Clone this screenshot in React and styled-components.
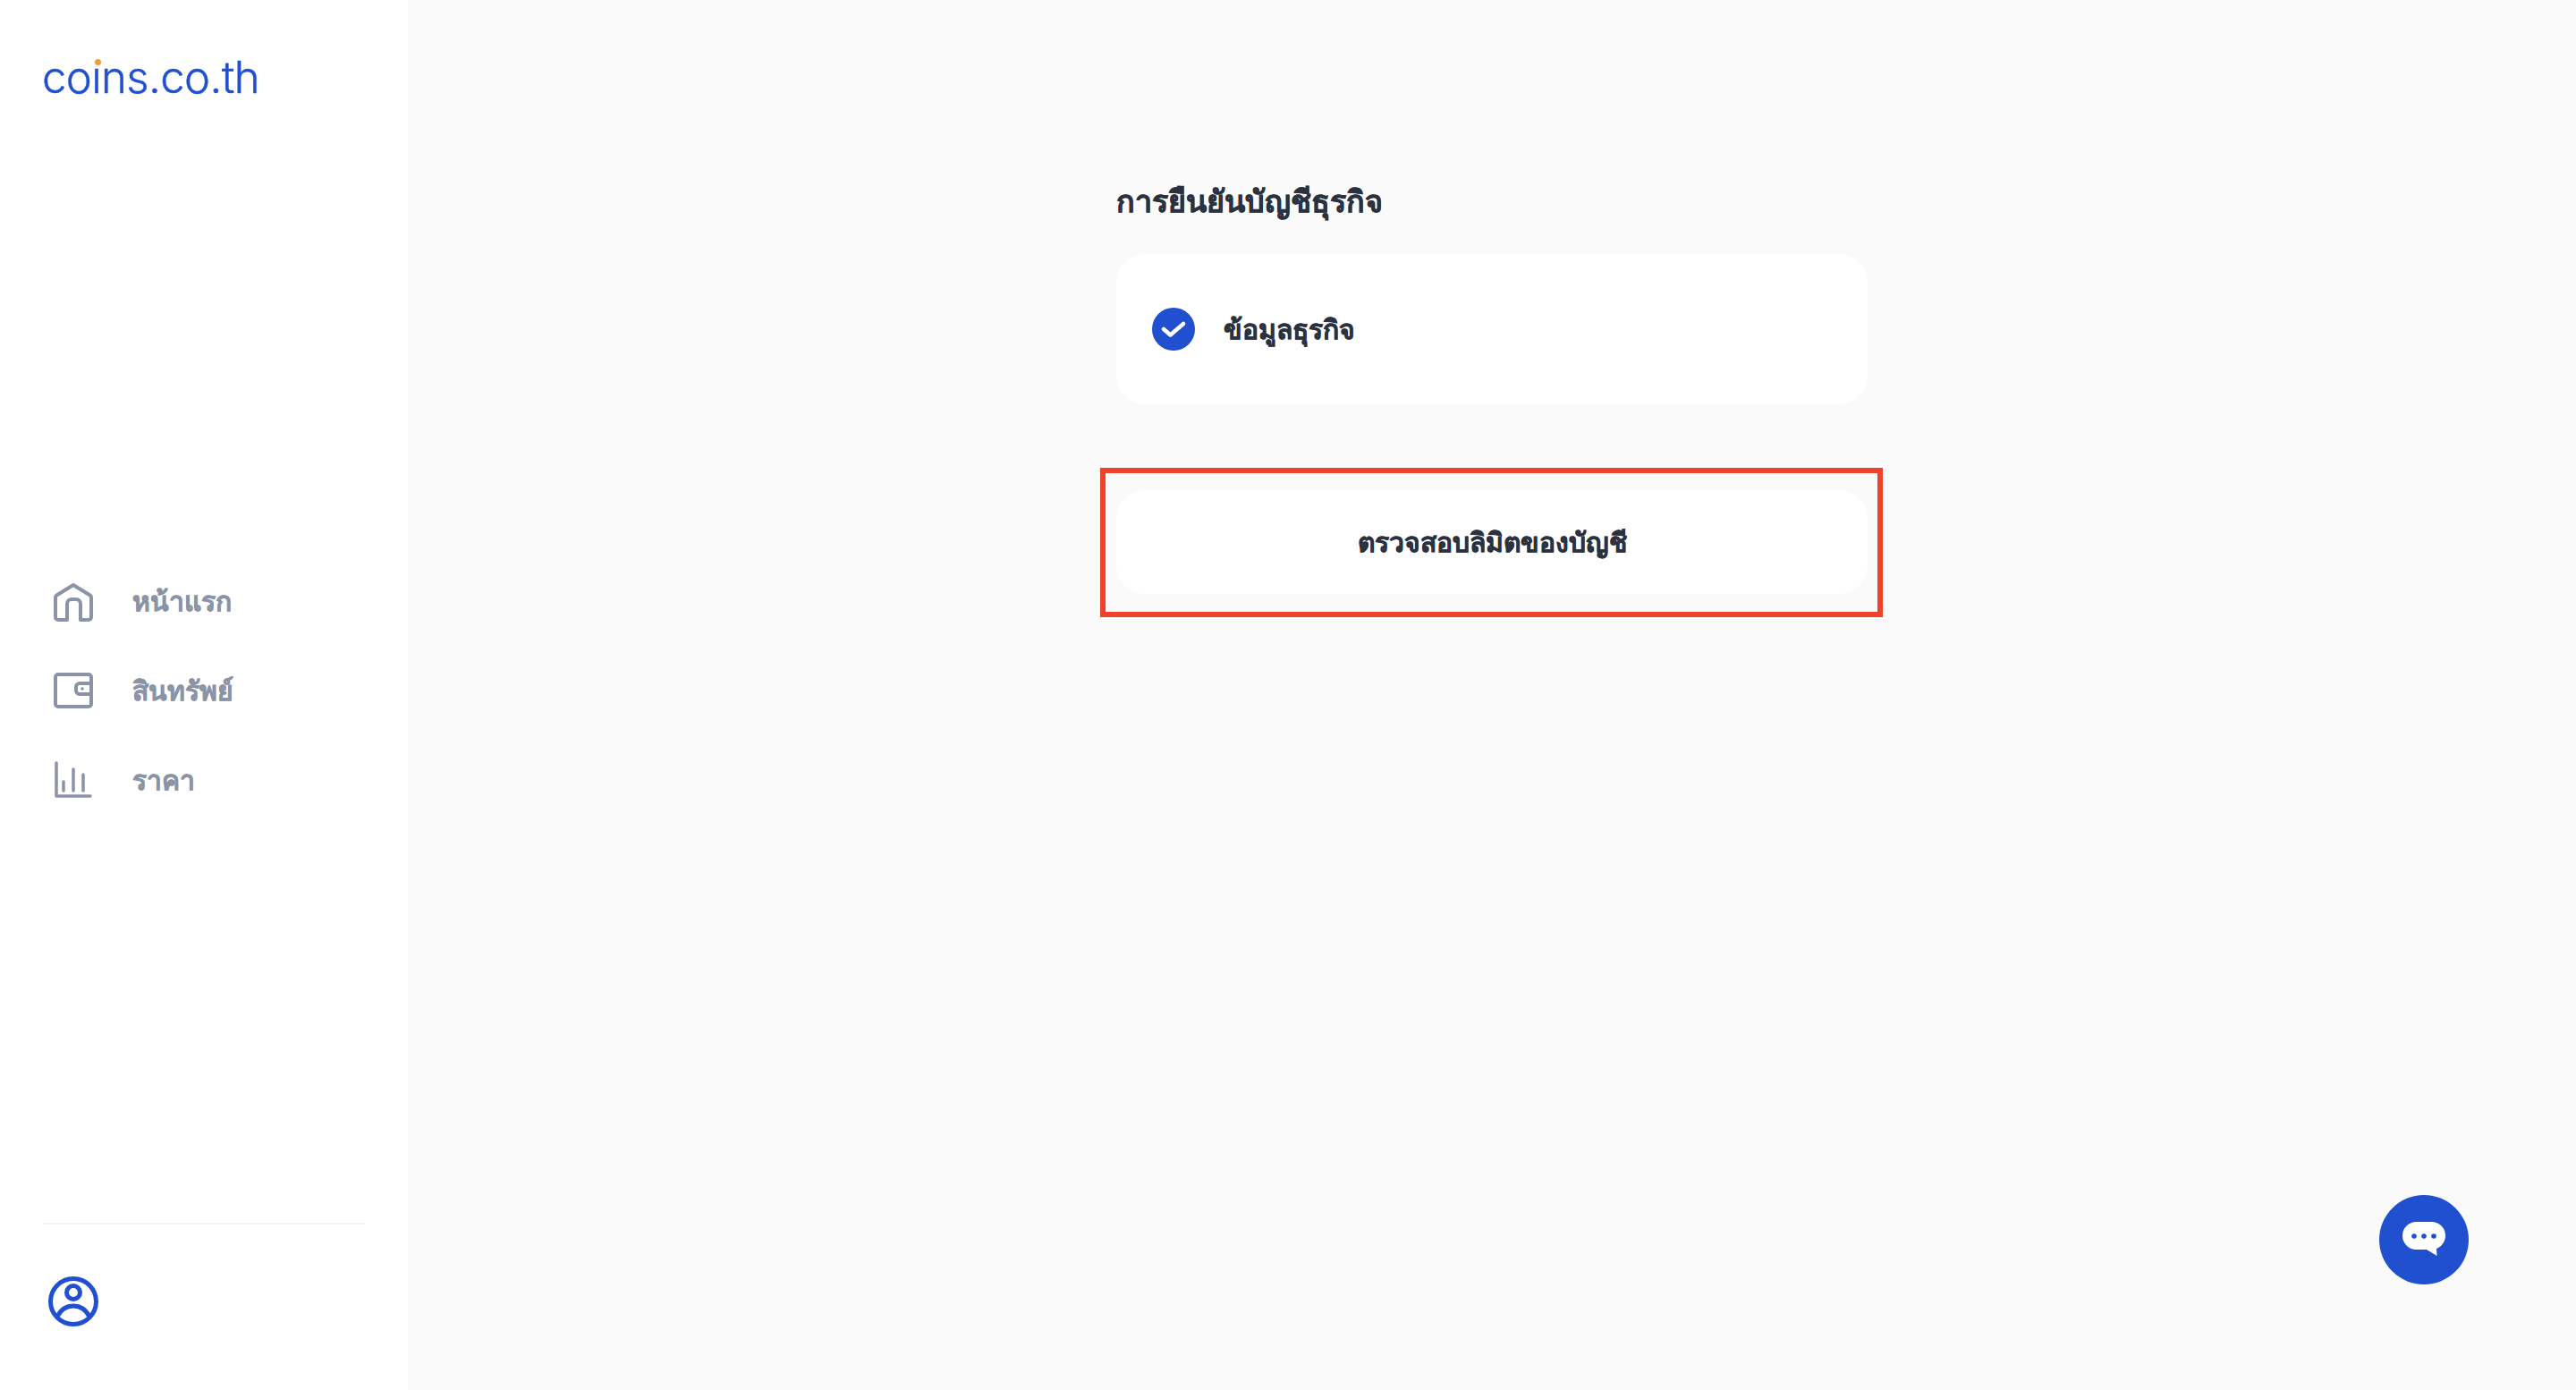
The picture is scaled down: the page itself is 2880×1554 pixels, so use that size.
import React from 'react';
import styled, { createGlobalStyle } from 'styled-components';

const BLUE = '#2050d0';
const INK = '#2a3140';
const MUTED = '#8a94a6';

const GlobalStyle = createGlobalStyle`
    html, body {
        margin: 0;
        padding: 0;
        background: #fafafa;
    }
    body {
        font-family: "Noto Sans", "Inter", "DejaVu Sans", sans-serif;
    }
`;

const Page = styled.div`
    display: flex;
    width: 2880px;
    height: 1554px;
    overflow: hidden;
    position: relative;
`;

const Sidebar = styled.aside`
    width: 456px;
    flex: none;
    height: 100%;
    background: #fff;
    display: flex;
    flex-direction: column;
    padding: 0 48px;
    box-sizing: border-box;
`;

const Logo = styled.div`
    height: 140px;
    padding-top: 47px;
    margin-left: -1px;
    box-sizing: border-box;
    font-family: "Inter", sans-serif;
    font-weight: 300;
    font-size: 49px;
    line-height: 80px;
    letter-spacing: -0.6px;
    color: ${BLUE};
    -webkit-text-stroke: 0.4px ${BLUE};
`;

const LogoText = styled.span`
    position: relative;
    display: inline-block;
    line-height: 80px;
`;

const LogoDot = styled.span`
    position: absolute;
    left: 59px;
    top: 19px;
    width: 7px;
    height: 7px;
    border-radius: 50%;
    background: #e8a33d;
    box-shadow: 0 0 0 1px #fff;
`;

const Nav = styled.nav`
    display: flex;
    flex-direction: column;
    gap: 20px;
    margin-top: 492px;
`;

const NavItem = styled.a`
    display: flex;
    align-items: center;
    gap: 42px;
    height: 80px;
    padding-left: 10px;
    color: ${MUTED};
    font-size: 30px;
    font-weight: 700;
    text-decoration: none;
    -webkit-text-stroke: 0.4px ${MUTED};

    svg {
        width: 48px;
        height: 48px;
        flex: none;
    }
`;

const SidebarFooter = styled.div`
    margin-top: auto;
    height: 187px;
    border-top: 2px solid #f4f4f5;
    box-sizing: border-box;
    padding: 58px 0 0 6px;

    svg {
        display: block;
        width: 56px;
        height: 56px;
    }
`;

const Main = styled.main`
    flex: 1;
    display: flex;
    justify-content: center;
`;

const Column = styled.div`
    width: 840px;
    padding-top: 198px;
    display: flex;
    flex-direction: column;
`;

const Heading = styled.h1`
    margin: 0 0 32px;
    height: 54px;
    line-height: 52px;
    font-size: 34px;
    font-weight: 700;
    color: ${INK};
    -webkit-text-stroke: 0.4px ${INK};
`;

const StepCard = styled.div`
    height: 168px;
    background: #fff;
    border-radius: 32px;
    display: flex;
    align-items: center;
    gap: 32px;
    padding: 0 40px;
`;

const StepCheck = styled.span`
    width: 48px;
    height: 48px;
    border-radius: 50%;
    background: ${BLUE};
    display: flex;
    align-items: center;
    justify-content: center;

    svg {
        width: 28px;
        height: 28px;
    }
`;

const StepLabel = styled.span`
    font-size: 30px;
    font-weight: 700;
    color: ${INK};
    -webkit-text-stroke: 0.4px ${INK};
`;

const ButtonWrap = styled.div`
    position: relative;
    margin-top: 96px;
`;

const LimitButton = styled.button`
    display: block;
    width: 100%;
    height: 116px;
    border: 0;
    border-radius: 32px;
    background: #fff;
    font-family: inherit;
    font-size: 30px;
    font-weight: 700;
    color: ${INK};
    -webkit-text-stroke: 0.4px ${INK};
`;

const Highlight = styled.div`
    position: absolute;
    left: -18px;
    right: -17px;
    top: -25px;
    bottom: -26px;
    border: 6px solid #ee4328;
    pointer-events: none;
`;

const ChatButton = styled.button`
    position: absolute;
    right: 120px;
    bottom: 118px;
    width: 100px;
    height: 100px;
    border: 0;
    padding: 0;
    border-radius: 50%;
    background: ${BLUE};
    display: flex;
    align-items: center;
    justify-content: center;

    svg {
        width: 48px;
        height: 40px;
    }
`;

const stroke = { fill: 'none', stroke: MUTED, strokeWidth: 4, strokeLinecap: 'round', strokeLinejoin: 'round' };

const HomeIcon = () => (
    <svg viewBox="0 0 48 48" {...stroke}>
        <path d="M17 45 V27 a5 5 0 0 1 5 -5 h5 a5 5 0 0 1 5 5 V45 H41 a3 3 0 0 0 3 -3 V20 a3 3 0 0 0 -1.300 -2.500 L24 6 L5.300 17.500 A3 3 0 0 0 4 20 V42 a3 3 0 0 0 3 3 Z" />
    </svg>
);

const WalletIcon = () => (
    <svg viewBox="0 0 48 48" {...stroke}>
        <rect x="4" y="6" width="40" height="36" rx="3" />
        <path d="M44 16 H31 a4 4 0 0 0 -4 4 V24 a4 4 0 0 0 4 4 H44" />
        <circle cx="34" cy="22" r="1.800" fill={MUTED} stroke="none" />
    </svg>
);

const ChartIcon = () => (
    <svg viewBox="0 0 48 48" {...stroke} strokeWidth="3.500">
        <path d="M5 5 V42 H43" />
        <path d="M13 26 V36" />
        <path d="M24 12 V36" />
        <path d="M35 18 V36" />
    </svg>
);

const UserIcon = () => (
    <svg viewBox="0 0 56 56" fill="none" stroke={BLUE} strokeWidth="5">
        <circle cx="28" cy="28" r="25.500" />
        <circle cx="28" cy="18" r="7.500" />
        <path d="M10 45 C14 37 20 33 28 33 C36 33 42 37 46 45" />
    </svg>
);

const CheckIcon = () => (
    <svg viewBox="0 0 28 28" fill="none" stroke="#fff" strokeWidth="4.500" strokeLinecap="round" strokeLinejoin="round">
        <path d="M3 14 L10.500 20.500 L25 8" />
    </svg>
);

const ChatIcon = () => (
    <svg viewBox="0 0 48 40">
        <path fill="#fff" d="M15.500 0 H32.500 a15.500 15.500 0 0 1 5.500 30 L38.500 38 L27 31 H15.500 a15.500 15.500 0 0 1 0 -31 Z" />
        <circle cx="13" cy="16" r="2.800" fill={BLUE} />
        <circle cx="24" cy="16" r="2.800" fill={BLUE} />
        <circle cx="35" cy="16" r="2.800" fill={BLUE} />
    </svg>
);

export default function App() {
    return (
        <Page>
            <GlobalStyle />
            <Sidebar>
                <Logo>
                    <LogoText>
                        coins.co.th
                        <LogoDot />
                    </LogoText>
                </Logo>
                <Nav>
                    <NavItem><HomeIcon />หน้าแรก</NavItem>
                    <NavItem><WalletIcon />สินทรัพย์</NavItem>
                    <NavItem><ChartIcon />ราคา</NavItem>
                </Nav>
                <SidebarFooter>
                    <UserIcon />
                </SidebarFooter>
            </Sidebar>
            <Main>
                <Column>
                    <Heading>การยืนยันบัญชีธุรกิจ</Heading>
                    <StepCard>
                        <StepCheck><CheckIcon /></StepCheck>
                        <StepLabel>ข้อมูลธุรกิจ</StepLabel>
                    </StepCard>
                    <ButtonWrap>
                        <LimitButton>ตรวจสอบลิมิตของบัญชี</LimitButton>
                        <Highlight />
                    </ButtonWrap>
                </Column>
            </Main>
            <ChatButton><ChatIcon /></ChatButton>
        </Page>
    );
}
